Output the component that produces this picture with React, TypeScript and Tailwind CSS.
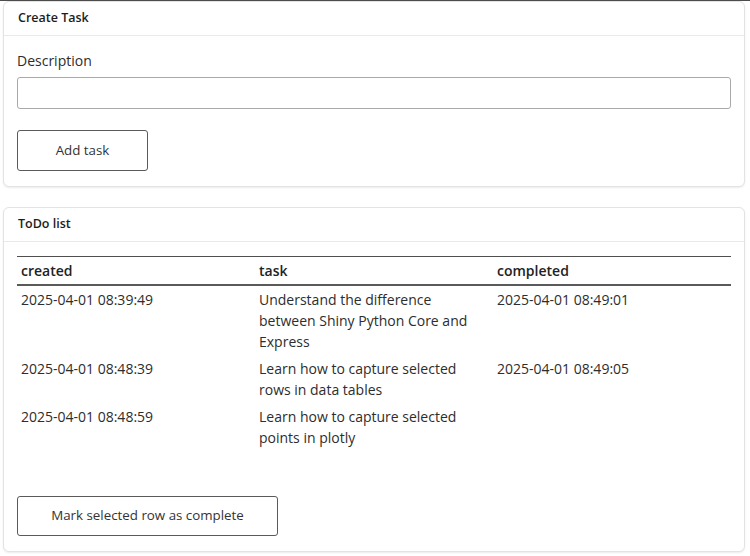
import React, { useState } from 'react';

type Task = { created: string; task: string; completed: string };

const initialTasks: Task[] = [
  {
    created: '2025-04-01 08:39:49',
    task: 'Understand the difference between Shiny Python Core and Express',
    completed: '2025-04-01 08:49:01',
  },
  {
    created: '2025-04-01 08:48:39',
    task: 'Learn how to capture selected rows in data tables',
    completed: '2025-04-01 08:49:05',
  },
  {
    created: '2025-04-01 08:48:59',
    task: 'Learn how to capture selected points in plotly',
    completed: '',
  },
];

const Card: React.FC<{ title: string; children: React.ReactNode }> = ({ title, children }) => (
  <div className="rounded-[6px] border border-[#e3e3e3] bg-white shadow-[0_1px_2px_rgba(0,0,0,0.08)]">
    <div className="border-b border-[#e9e9e9] px-[14px] pt-[6px] pb-[8px] text-[12.5px] font-semibold leading-[19px] text-[#1d1d1d]">
      {title}
    </div>
    <div className="px-[13px] pt-[14px] pb-[15px]">{children}</div>
  </div>
);

const App: React.FC = () => {
  const [tasks] = useState<Task[]>(initialTasks);
  const [desc, setDesc] = useState('');

  return (
    <div
      className="min-h-screen bg-white border-t border-[#4d4d4d] pl-[3px] pr-[5px] text-[#2d2d2d]"
      style={{ fontFamily: '"Open Sans", "Liberation Sans", sans-serif' }}
    >
      <div className="flex flex-col gap-[20px]">
        <Card title="Create Task">
          <label className="block text-[14px] leading-[21px] mb-[6px]">Description</label>
          <input
            value={desc}
            onChange={(e) => setDesc(e.target.value)}
            className="block w-full h-[32px] rounded-[3px] border border-[#a9a9a9] px-2 text-[14px] outline-none"
          />
          <button className="mt-[21px] h-[41px] w-[131px] rounded-[3px] border border-[#5a5a5a] bg-white pt-[1px] text-[13.33px] text-[#333]">
            Add task
          </button>
        </Card>

        <Card title="ToDo list">
          <table className="w-full table-fixed border-collapse text-[14px] leading-[21px]">
            <thead>
              <tr className="border-t border-[#4f4f4f] border-b-2 border-b-[#5a5a5a]">
                <th className="w-1/3 px-[4px] pt-[3px] pb-[3px] text-left font-semibold text-[#222]">created</th>
                <th className="w-1/3 px-[4px] pt-[3px] pb-[3px] text-left font-semibold text-[#222]">task</th>
                <th className="w-1/3 px-[4px] pt-[3px] pb-[3px] text-left font-semibold text-[#222]">completed</th>
              </tr>
            </thead>
            <tbody>
              {tasks.map((t) => (
                <tr key={t.created} className="align-top">
                  <td className="px-[4px] py-[3px]">{t.created}</td>
                  <td className="px-[4px] py-[3px] pr-[24px]">{t.task}</td>
                  <td className="px-[4px] py-[3px]">{t.completed}</td>
                </tr>
              ))}
            </tbody>
          </table>
          <button className="mt-[45px] h-[40px] w-[261px] rounded-[3px] border border-[#5a5a5a] bg-white text-[13.33px] text-[#333]">
            Mark selected row as complete
          </button>
        </Card>
      </div>
    </div>
  );
};

export default App;
